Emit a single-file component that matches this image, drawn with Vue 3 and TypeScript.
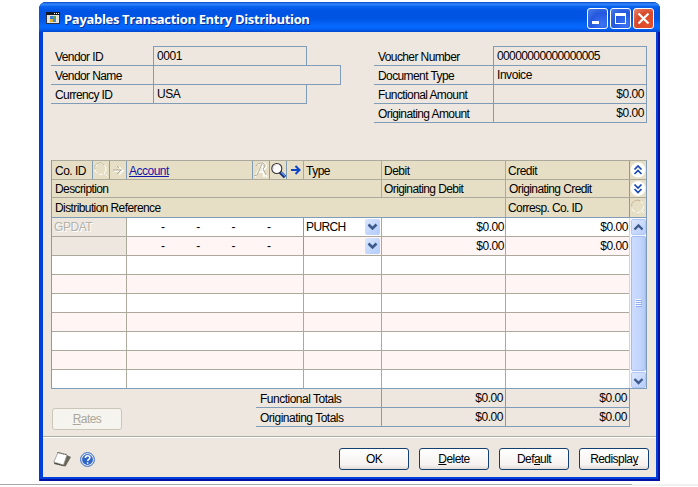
<script setup lang="ts">
interface Field { label: string; value: string; kind?: string }

const vendorFields: Field[] = [
  { label: 'Vendor ID', value: '0001' },
  { label: 'Vendor Name', value: '', kind: 'wide' },
  { label: 'Currency ID', value: 'USA' },
]
const documentFields: Field[] = [
  { label: 'Voucher Number', value: '00000000000000005', kind: 'digits' },
  { label: 'Document Type', value: 'Invoice' },
  { label: 'Functional Amount', value: '$0.00', kind: 'amount' },
  { label: 'Originating Amount', value: '$0.00', kind: 'amount' },
]

interface Line { company: string; type: string; debit: string; credit: string; filled: boolean }
const empty: Line = { company: '', type: '', debit: '', credit: '', filled: false }
const lines: Line[] = [
  { company: 'GPDAT', type: 'PURCH', debit: '$0.00', credit: '$0.00', filled: true },
  { company: '', type: '', debit: '$0.00', credit: '$0.00', filled: true },
  ...Array.from({ length: 7 }, () => empty),
]
const totals = ['Functional Totals', 'Originating Totals']
const actions: [string, string, string][] = [
  ['OK', '', ''],
  ['', 'D', 'elete'],
  ['Def', 'a', 'ult'],
  ['Redispla', 'y', ''],
]
</script>

<template>
  <div class="page">
    <section class="window">
      <header class="titlebar">
        <svg class="app-icon" width="14" height="12" viewBox="0 0 14 12">
          <path fill="#2a3346" d="M0 0h14v12H0z" />
          <path fill="#e8e4d8" d="M1 3h12v8H1z" />
          <path fill="#101522" d="M0 0h14v3H0z" /><path fill="#fff" d="M8 1h1v1H8zM10 1h1v1h-1zM12 1h1v1h-1z" />
          <path fill="#3d7bd0" d="M4 4h3v3H4z" /><path fill="#5aa845" d="M7 4h3v3H7z" />
          <path fill="#e4b32f" d="M4 7h3v3H4z" /><path fill="#4389d8" d="M7 7h3v3H7z" />
        </svg>
        <h1>Payables Transaction Entry Distribution</h1>
        <div class="controls">
          <span class="ctl"><svg width="19" height="19"><path fill="#fff" d="M4 12h7v3H4z" /></svg></span>
          <span class="ctl"><svg width="19" height="19"><path fill="#fff" fill-rule="evenodd" d="M4 4h11v11H4zM5 7v7h9V7z" /></svg></span>
          <span class="ctl close"><svg width="19" height="19"><path fill="none" stroke="#fff" stroke-width="2.2" d="M4.5 4.5l10 10M14.5 4.5l-10 10" /></svg></span>
        </div>
      </header>

      <main class="body">
        <div class="top">
          <div class="fields vendor">
            <div v-for="f in vendorFields" :key="f.label" class="field" :class="f.kind">
              <label>{{ f.label }}</label><div class="box">{{ f.value }}</div>
            </div>
          </div>
          <div class="fields document">
            <div v-for="f in documentFields" :key="f.label" class="field" :class="f.kind">
              <label>{{ f.label }}</label><div class="box">{{ f.value }}</div>
            </div>
          </div>
        </div>

        <div class="table">
          <div class="hrow h1">
            <div class="cell">Co. ID</div>
            <div class="icon">
              <svg width="16" height="18"><circle cx="7.5" cy="8" r="5.5" fill="none" stroke="#fff" stroke-dasharray="4 2" /><path d="M2 8a5 5 0 0 1 9-4" fill="none" stroke="#c3bda4" /><path d="M11 12l4 4" stroke="#fff" stroke-dasharray="2 1" /></svg>
            </div>
            <div class="icon">
              <svg width="16" height="18" fill="none"><path d="M4 10h9l-4 4M9 6l4 4" stroke="#fff" stroke-width="1.3" /><path d="M3 9h9M7 5l2 2M7 13l4-4" stroke="#b0aa93" /></svg>
            </div>
            <div class="cell account"><a>Account</a></div>
            <div class="icon">
              <svg width="16" height="18" fill="none"><path d="M2 16L9 4l2 12M5 11h6M4 4q7-4 9 0q1 4-4 5l5 7" stroke="#fff" stroke-width="1.5" /><path d="M1 15l3-1L9 3M3 5q1-3 7-3 4 2 0 6l3 6" stroke="#b0aa93" /></svg>
            </div>
            <div class="icon">
              <svg width="16" height="18"><path d="M10 11l5 5" stroke="#132d7c" stroke-width="3.4" /><path d="M11 11l4 4" stroke="#5d9bef" stroke-width="1.4" /><circle cx="6.8" cy="7.5" r="5" fill="#fdfbfa" stroke="#35313a" stroke-width="1.1" /><path d="M3.5 8a3.5 3.5 0 0 1 3-4" fill="none" stroke="#e3d8d8" /></svg>
            </div>
            <div class="icon">
              <svg width="16" height="18"><path d="M4 9h8M8.5 5l4 4-4 4" fill="none" stroke="#0d46c8" stroke-width="2" /></svg>
            </div>
            <div class="cell ruled">Type</div>
            <div class="cell ruled">Debit</div>
            <div class="cell ruled">Credit</div>
            <div class="icon">
              <svg width="16" height="18"><circle cx="8" cy="9" r="7.5" fill="#fff" /><path d="M4.5 8.5L8 5l3.5 3.5M4.5 13L8 9.5l3.5 3.5" fill="none" stroke="#1747b5" stroke-width="1.7" /></svg>
            </div>
          </div>
          <div class="hrow h2">
            <div class="cell">Description</div>
            <div class="cell ruled">Originating Debit</div>
            <div class="cell ruled indent">Originating Credit</div>
            <div class="icon">
              <svg width="16" height="17"><circle cx="8" cy="8.5" r="7.5" fill="#fff" /><path d="M4.5 4.5L8 8l3.5-3.5M4.5 9L8 12.5 11.5 9" fill="none" stroke="#1747b5" stroke-width="1.7" /></svg>
            </div>
          </div>
          <div class="hrow h3">
            <div class="cell">Distribution Reference</div>
            <div class="cell ruled">Corresp. Co. ID</div>
            <div class="icon">
              <svg width="16" height="19"><circle cx="7.5" cy="8.5" r="6" fill="none" stroke="#fff" stroke-dasharray="4 2" /><path d="M1.5 8.5a6 6 0 0 1 9-5.500" fill="none" stroke="#c3a98a" /><path d="M11 12l3 3" stroke="#fff" /></svg>
            </div>
          </div>
          <div class="grid">
            <div class="rows">
              <div v-for="(l, i) in lines" :key="i" class="row" :class="{ filled: l.filled, odd: i % 2 === 1 }">
                <div class="company">{{ l.company }}</div>
                <div class="segments"><template v-if="l.filled"><i v-for="n in 4" :key="n">-</i></template></div>
                <div class="type">
                  <span>{{ l.type }}</span>
                  <b v-if="l.filled" class="drop"><svg width="15" height="16"><path d="M3.5 5.5l4 4 4-4" fill="none" stroke="#3d5a8c" stroke-width="2.6" /></svg></b>
                </div>
                <div class="money">{{ l.debit }}</div>
                <div class="money">{{ l.credit }}</div>
              </div>
            </div>
            <div class="scroll">
              <b class="arrow"><svg width="13" height="13"><path d="M2.5 8.5l4-4 4 4" fill="none" stroke="#3d5a8c" stroke-width="2.4" /></svg></b>
              <div class="thumb"><svg width="7" height="8"><path d="M0 .5h6M0 2.5h6M0 4.5h6M0 6.5h6" stroke="#f4f8ff" /><path d="M1 1.5h6M1 3.5h6M1 5.5h6M1 7.5h6" stroke="#91acee" /></svg></div>
              <b class="arrow"><svg width="13" height="13"><path d="M2.5 5l4 4 4-4" fill="none" stroke="#3d5a8c" stroke-width="2.4" /></svg></b>
            </div>
          </div>
        </div>

        <div class="under">
          <button class="btn disabled"><span><u>R</u>ates</span></button>
          <div class="totals">
            <div v-for="t in totals" :key="t" class="total">
              <label>{{ t }}</label><div>$0.00</div><div>$0.00</div>
            </div>
          </div>
        </div>
      </main>

      <footer class="footer">
        <svg class="note" width="19" height="17" viewBox="0 0 19 17">
          <path d="M12.5 3.500l5.500 2.500-5.500 9.500L1 13z" fill="#68675a" />
          <path d="M5 1.500l9 2.500-3.500 10L.8 11z" fill="#fff" stroke="#8c8a80" stroke-width=".7" />
          <path d="M4.500 1.500l9 2" stroke="#4b4a42" stroke-width="1.200" stroke-dasharray="1 1" />
          <path d="M1 12l10 3" stroke="#3e3d36" stroke-dasharray="1.500 1" />
        </svg>
        <svg class="help" width="15" height="15" viewBox="0 0 15 15">
          <circle cx="7.500" cy="7.500" r="6.900" fill="#e9effb" stroke="#3465b9" /><circle cx="7.500" cy="7.500" r="5.400" fill="#2f65c5" />
          <path d="M5.300 6q0-2.300 2.300-2.300t2.300 2q0 1-1.200 1.700-1 .6-1 1.600M7.600 10.200v1.600" fill="none" stroke="#fff" stroke-width="1.500" />
        </svg>
        <div class="actions">
          <button v-for="(a, i) in actions" :key="i" class="btn"><span>{{ a[0] }}<u v-if="a[1]">{{ a[1] }}</u>{{ a[2] }}</span></button>
        </div>
      </footer>
    </section>
    <div class="baseline"><i></i><b></b></div>
  </div>
</template>

<style>
body { margin: 0; background: #fff; overflow: hidden; }
</style>

<style scoped>
* { box-sizing: border-box; }
.page { width: 698px; height: 487px; padding-top: 2px; overflow: hidden; background: #fff; font: 12px/18px "Liberation Sans", Arial, sans-serif; letter-spacing: -0.6px; color: #000; white-space: nowrap; }
svg { display: block; flex: none; }
.window { width: 621px; height: 479px; margin-left: 39px; padding: 0 4px 4px; border-radius: 7px 7px 0 0; background: #003fdc; box-shadow: inset 1px 0 #0a35c8, inset -2px -2px #0011a4; display: flex; flex-direction: column; }
.titlebar { height: 30px; margin: 0 -4px; padding: 2px 6px 0 7px; flex: none; display: flex; align-items: center; border-radius: 7px 7px 0 0; background: linear-gradient(#0b46c9 0, #3389f9 7%, #0a60ef 16%, #0054e3 30%, #0054e4 55%, #0567fb 78%, #0566fb 88%, #0046cf 100%); }
h1 { flex: 1; margin: 2px 0 0 4px; font: bold 13px/20px "Open Sans", "Noto Sans", sans-serif; letter-spacing: -0.32px; color: #fff; text-shadow: 1px 1px #0b2f93; }
.controls { display: flex; gap: 2px; padding-top: 1px; }
.ctl { width: 21px; height: 21px; border: 1px solid #fff; border-radius: 3px; background: radial-gradient(circle at 75% 80%, #3e74f5, #2457dd 55%, #4b80ea); }
.ctl.close { background: radial-gradient(circle at 75% 80%, #e4502a, #d8482a 55%, #e98870); }
.body { flex: none; height: 405px; padding: 14px 9px 0 8px; background: #eee7df; border-bottom: 1px solid #aeaca0; }
.top { width: 596px; height: 114px; display: flex; justify-content: space-between; align-items: flex-start; }
.field { display: flex; height: 19px; }
.field label { border-bottom: 1px solid #7f9db9; padding: 2px 0 0 4px; height: 20px; }
.box { height: 20px; border: 1px solid #7f9db9; padding: 0 3px; letter-spacing: -0.45px; }
.vendor label { width: 102px; }
.vendor .box { width: 154px; }
.vendor .wide .box { width: 188px; }
.document label { width: 119px; }
.document .box { width: 154px; }
.digits .box { letter-spacing: -0.62px; }
.amount .box { text-align: right; padding-right: 2px; }
.table { width: 596px; height: 229px; border: 1px solid #7f9db9; border-color: #aaa99b #7f9db9 #7f9db9; background: #fff; }
.hrow { display: grid; background: #e7dfc5; border-bottom: 1px solid #aaa99b; }
.h1 { height: 19px; grid-template-columns: 40px 17px 17px 126px 17px 17px 17px 78px 124px 124px 17px; }
.h2 { height: 18px; grid-template-columns: 329px 124px 124px 17px; }
.h3 { height: 20px; grid-template-columns: 453px 124px 17px; border-color: #7f9db9; }
.cell { padding: 1px 0 0 3px; height: 100%; line-height: 17px; overflow: hidden; }
.h1 .cell { padding-top: 2px; line-height: 16px; letter-spacing: -0.5px; }
.h3 .cell { padding-top: 1px; line-height: 18px; }
.cell.ruled { border-left: 1px solid #aaa99b; padding-left: 2px; }
.cell.ruled.indent { padding-left: 3px; }
.icon { border-left: 1px solid #7f9db9; height: 100%; overflow: hidden; }
.cell.account { border-left: 1px solid #7f9db9; padding-left: 2px; }
.account a { color: #1414a8; text-decoration: underline; }
.grid { display: flex; height: 170px; }
.rows { width: 577px; overflow: hidden; }
.row { height: 19px; display: grid; grid-template-columns: 74px 177px 78px 124px 124px; border-bottom: 1px solid #aaa99b; background: #fff; line-height: 18px; letter-spacing: -0.45px; }
.row.odd { background: #fff5f5; }
.row > div { height: 100%; overflow: hidden; border-left: 1px solid #aaa99b; }
.row > .company { border-left: 0; padding-left: 2px; color: #b4b1a9; text-shadow: 1px 1px #fff; }
.filled .company { background: #eee7df; }
.segments { display: flex; padding-left: 34px; }
.segments i { width: 35.3px; font-style: normal; }
.type { display: flex; justify-content: space-between; padding-left: 2px; letter-spacing: -0.6px; }
.filled > .type { border-color: #7f9db9; }
.drop { width: 15px; height: 16px; margin: 1px 1px 0 0; border-radius: 2px; background: linear-gradient(135deg, #d9e6ff, #b2cbfb); }
.money { text-align: right; padding-right: 1px; }
.scroll { width: 17px; padding: 1px 0 0 1px; border-left: 1px solid #c9d7ee; background: #f5f7fd; display: flex; flex-direction: column; gap: 1px; }
.arrow { width: 15px; height: 16px; padding: 1px 0 0; border: 1px solid #b3c9f5; border-radius: 2px; background: linear-gradient(135deg, #dce7ff, #b7cdfb); }
.thumb { flex: 1; width: 15px; border: 1px solid #a4bdf0; border-radius: 2px; display: grid; place-items: center; padding-bottom: 2px; background: linear-gradient(90deg, #cddcff, #c3d5fd 60%, #b3caf8); }
.under { display: flex; justify-content: space-between; height: 48px; padding-right: 17px; }
.total { height: 19px; display: flex; border-bottom: 1px solid #7f9db9; }
.total label { width: 125px; padding: 2px 0 0 4px; line-height: 17px; letter-spacing: -0.5px; }
.total div { width: 124px; height: 19px; line-height: 19px; letter-spacing: -0.45px; text-align: right; padding-right: 2px; border-left: 1px solid #7f9db9; }
.total div:last-child { width: 125px; border-right: 1px solid #7f9db9; }
.btn { width: 70px; height: 22px; padding: 1px 0 0; border: 1px solid #153f6f; border-radius: 3px; background: linear-gradient(#fff, #f6f2f0 80%, #e2dcd7); font: inherit; letter-spacing: -0.55px; color: inherit; line-height: 19px; }
.btn.disabled { margin: 19px 0 0 1px; color: #aaa79a; background: #f6f4ee; border-color: #cac7b8; }
.footer { flex: 1; display: flex; align-items: flex-start; background: #eee7df; border-top: 1px solid #fff; padding: 0 7px 0 10px; }
.note { margin-top: 13px; }
.help { margin: 14px 0 0 8px; }
.actions { display: flex; gap: 10px; margin: 10px 0 0 auto; }
.baseline { display: flex; height: 3px; margin-top: 3px; }
.baseline i { width: 632px; height: 1px; background: #a9a9a9; }
.baseline b { flex: 1; height: 2px; background: #f0f0f0; }
</style>
